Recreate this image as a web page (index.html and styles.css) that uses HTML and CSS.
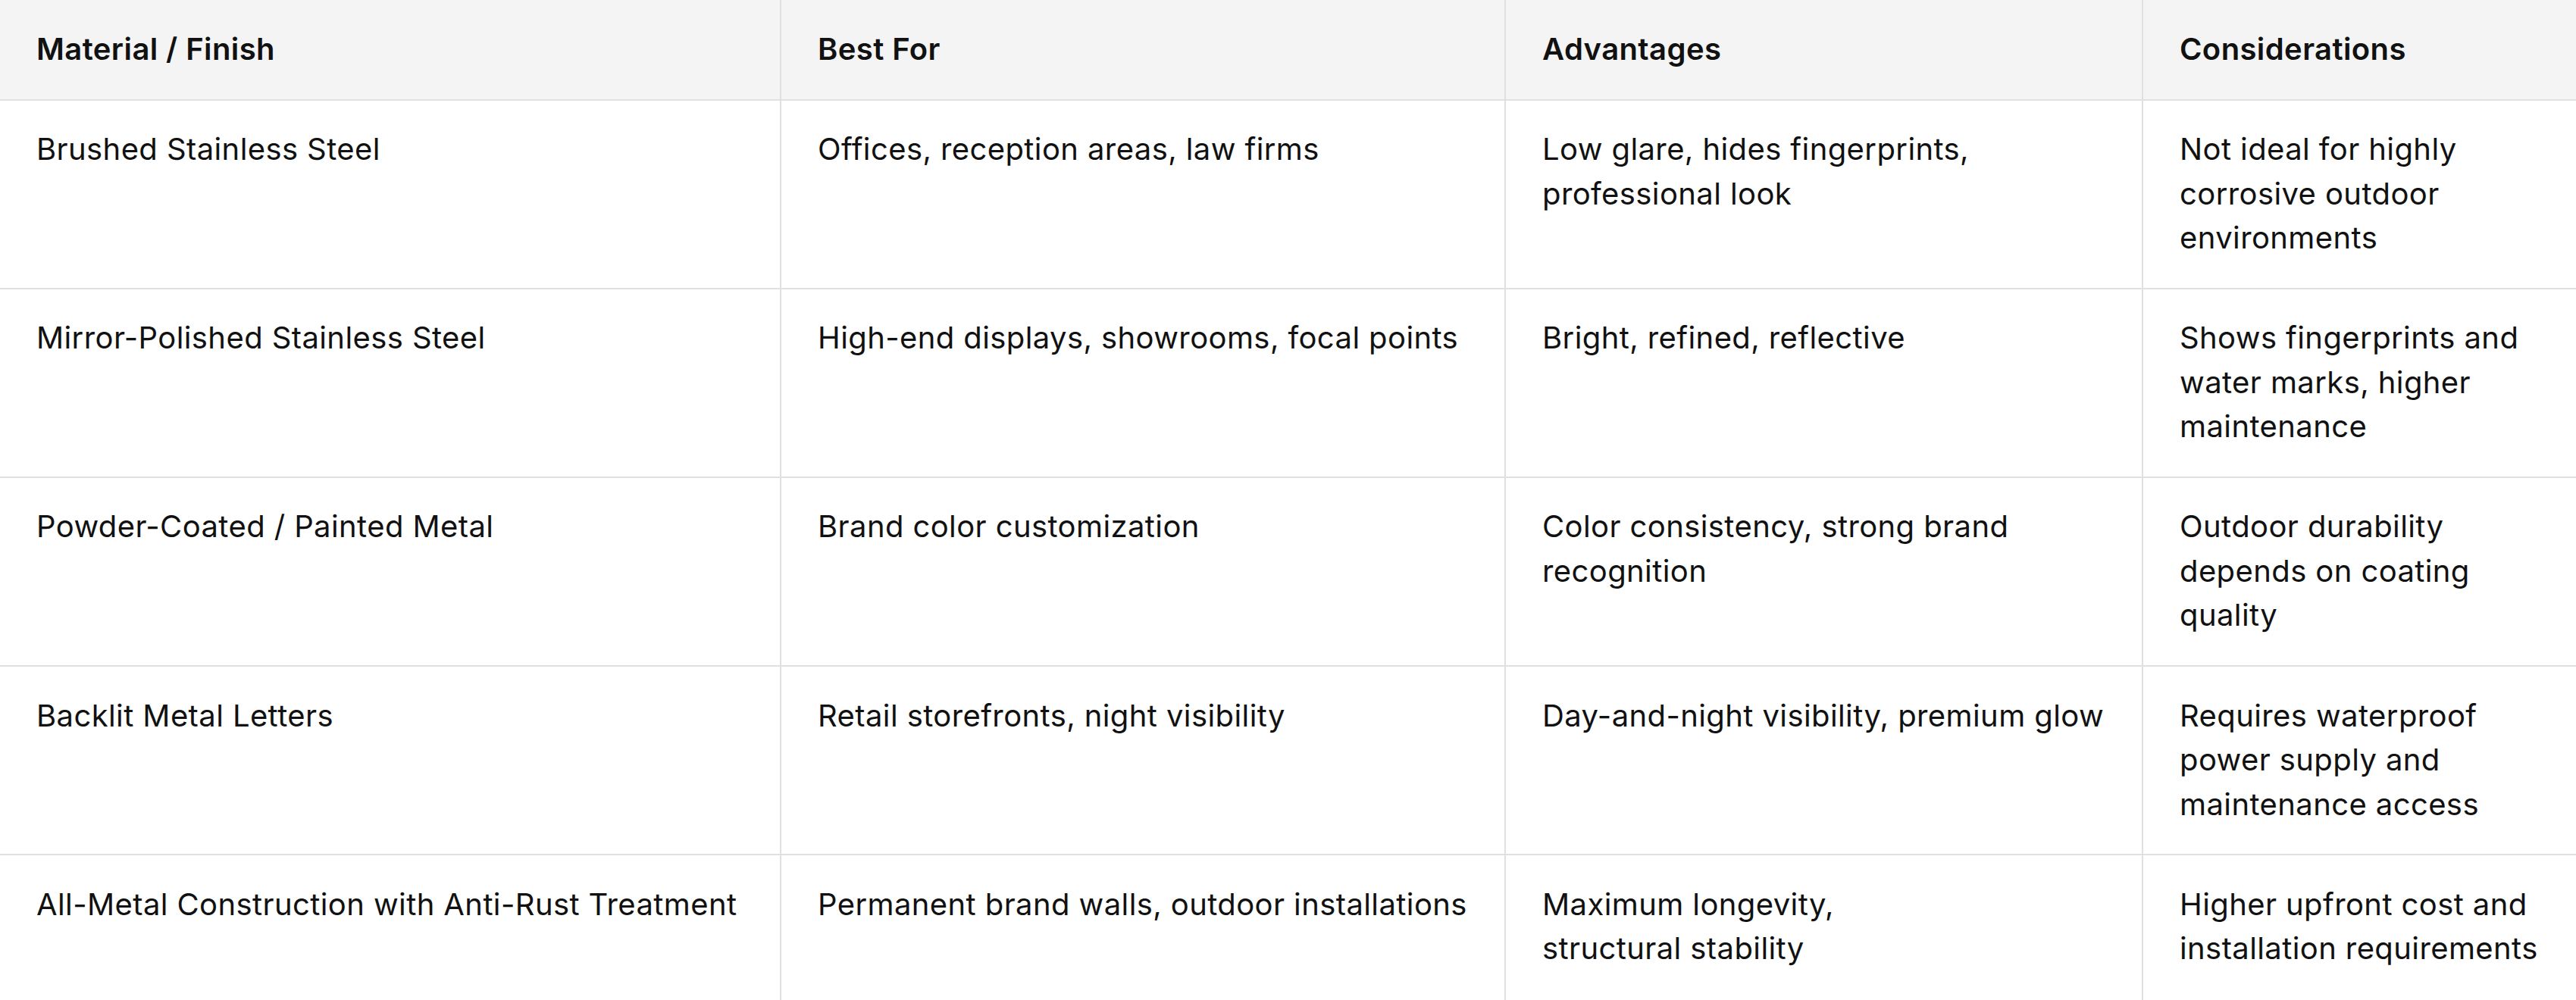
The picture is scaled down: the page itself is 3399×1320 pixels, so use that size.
FILE: index.html
```html
<!DOCTYPE html>
<html lang="en">
<head>
<meta charset="utf-8">
<title>Metal Finishes</title>
<link rel="stylesheet" href="styles.css">
</head>
<body>
<table class="grid">
  <colgroup>
    <col class="c1"><col class="c2"><col class="c3"><col class="c4">
  </colgroup>
  <thead>
    <tr>
      <th>Material / Finish</th>
      <th>Best For</th>
      <th>Advantages</th>
      <th>Considerations</th>
    </tr>
  </thead>
  <tbody>
    <tr>
      <td>Brushed Stainless Steel</td>
      <td>Offices, reception areas, law firms</td>
      <td>Low glare, hides fingerprints, professional look</td>
      <td>Not ideal for highly corrosive outdoor environments</td>
    </tr>
    <tr>
      <td>Mirror-Polished Stainless Steel</td>
      <td>High-end displays, showrooms, focal points</td>
      <td>Bright, refined, reflective</td>
      <td>Shows fingerprints and water marks, higher maintenance</td>
    </tr>
    <tr>
      <td>Powder-Coated / Painted Metal</td>
      <td>Brand color customization</td>
      <td>Color consistency, strong brand recognition</td>
      <td>Outdoor durability depends on coating quality</td>
    </tr>
    <tr>
      <td>Backlit Metal Letters</td>
      <td>Retail storefronts, night visibility</td>
      <td>Day-and-night visibility, premium glow</td>
      <td>Requires waterproof power supply and maintenance access</td>
    </tr>
    <tr>
      <td>All-Metal Construction with Anti-Rust Treatment</td>
      <td>Permanent brand walls, outdoor installations</td>
      <td>Maximum longevity,<br>structural stability</td>
      <td>Higher upfront cost and installation requirements</td>
    </tr>
  </tbody>
</table>
</body>
</html>
```
FILE: styles.css
```css
html, body {
  margin: 0;
  padding: 0;
  background: #ffffff;
}
body {
  font-family: Inter, "Noto Sans", "Liberation Sans", sans-serif;
  color: #111111;
  font-size: 40px;
  line-height: 58.5px;
  letter-spacing: 0.4px;
}
.grid {
  border-collapse: collapse;
  table-layout: fixed;
  width: 3399px;
}
.c1 { width: 1030px; }
.c2 { width: 956px; }
.c3 { width: 841px; }
.c4 { width: 572px; }
.grid th,
.grid td {
  text-align: left;
  vertical-align: top;
  padding: 35.8px 48px;
  border: 2px solid #e0e0e0;
}
.grid th {
  background: #f4f4f4;
  font-weight: 600;
  padding-top: 36px;
  padding-bottom: 36px;
}
.grid tr > :first-child { border-left: none; }
.grid tr > :last-child { border-right: none; }
.grid thead th { border-top: none; }
.grid tbody tr:last-child td {
  border-bottom: none;
  padding-bottom: 96px;
}
```
